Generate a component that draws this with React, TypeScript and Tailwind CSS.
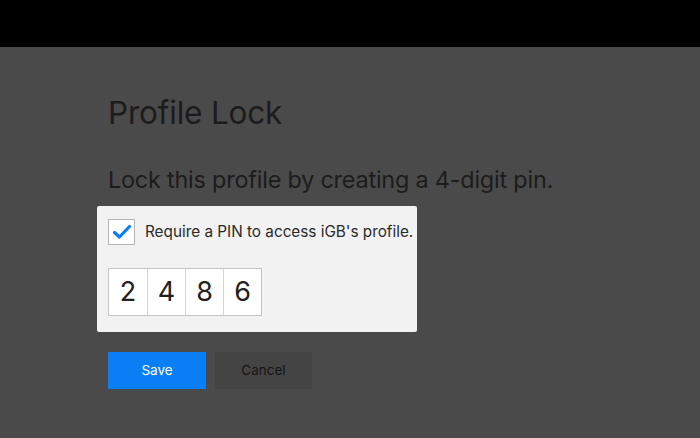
import React, { useState } from 'react';

export default function App() {
  const [checked, setChecked] = useState(true);
  const pin = ['2', '4', '8', '6'];

  return (
    <div className="w-[700px] h-[438px] bg-[#4a4a4a] flex flex-col overflow-hidden" style={{ fontFamily: 'Inter, "Liberation Sans", sans-serif' }}>
      <div className="h-[47px] bg-black shrink-0" />
      <div className="pl-[108px] pt-[47px] flex flex-col text-[#1c1c1c]">
        <h1 className="text-[31.5px] leading-[38px] font-normal tracking-[-0.2px]">Profile Lock</h1>
        <p className="mt-[33px] text-[23.4px] leading-[30px] tracking-[-0.2px]">Lock this profile by creating a 4-digit pin.</p>

        <div className="-ml-[11px] mt-[11px] w-[320px] h-[126px] bg-[#f2f2f2] rounded-[2px] pl-[11px] pt-[13px]">
          <label className="flex items-center gap-[10px] cursor-pointer">
            <button
              onClick={() => setChecked(c => !c)}
              className="w-[27px] h-[26px] bg-white border border-[#b5b5b5] flex items-center justify-center"
            >
              {checked && (
                <svg width="20" height="16" viewBox="0 0 20 16">
                  <path d="M2.5 8.5 L7.5 13 L17.5 2.5" fill="none" stroke="#0a7ff5" strokeWidth="3.2" strokeLinecap="round" strokeLinejoin="round" />
                </svg>
              )}
            </button>
            <span className="text-[15.3px] text-[#2a2a2a]">Require a PIN to access iGB's profile.</span>
          </label>

          <div className="mt-[23px] flex w-fit border border-[#c4c4c4] bg-white">
            {pin.map((d, i) => (
              <div
                key={i}
                className={`w-[38px] h-[46px] flex items-center justify-center text-[27px] text-[#222] ${i > 0 ? 'border-l border-[#d4d4d4]' : ''}`}
              >
                {d}
              </div>
            ))}
          </div>
        </div>

        <div className="mt-[20px] flex gap-[9px]">
          <button className="w-[98px] h-[37px] bg-[#0a7ff5] text-white text-[13.5px]">Save</button>
          <button className="w-[97px] h-[37px] bg-[#444444] text-[#141414] text-[13.5px]">Cancel</button>
        </div>
      </div>
    </div>
  );
}
